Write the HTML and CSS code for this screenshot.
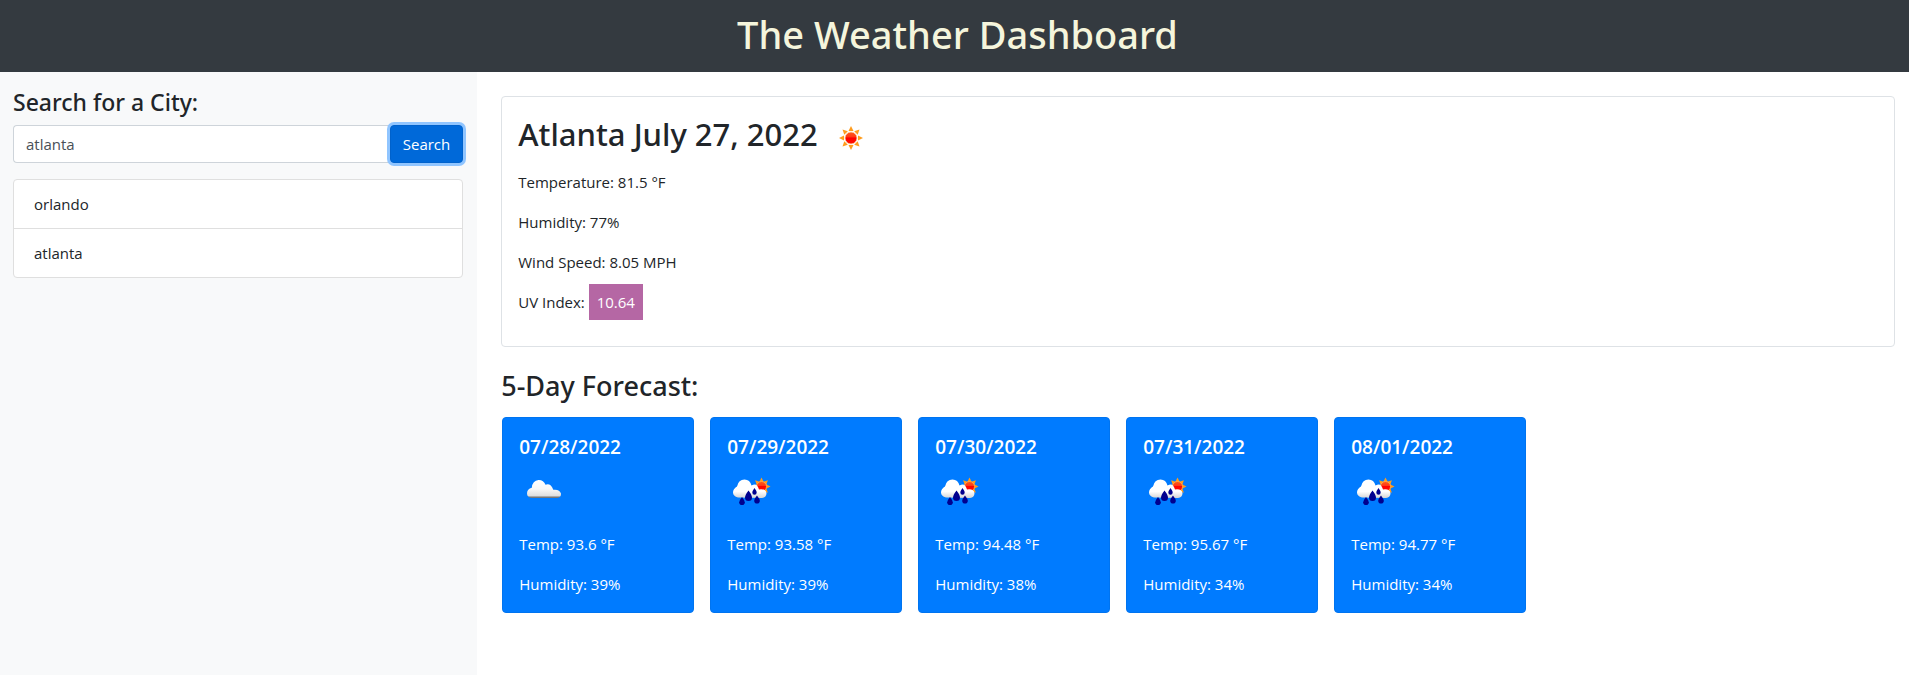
FILE: index.html
```
<!DOCTYPE html>
<html lang="en">
<head>
<meta charset="utf-8">
<title>The Weather Dashboard</title>
<meta name="viewport" content="width=device-width, initial-scale=1">
<link rel="stylesheet" href="styles.css">
</head>
<body>
<svg class="defs" aria-hidden="true">
  <defs>
    <linearGradient id="sunCore" x1="0" y1="0" x2="0" y2="1"><stop offset="0" stop-color="#ff5a1c"/><stop offset=".4" stop-color="#ff3a14"/><stop offset=".5" stop-color="#ff0000"/><stop offset="1" stop-color="#ff1200"/></linearGradient>
    <linearGradient id="cloudFill" x1="0" y1="0" x2="0" y2="1"><stop offset="0" stop-color="#fff"/><stop offset=".5" stop-color="#f8f8f8"/><stop offset=".88" stop-color="#dedede"/><stop offset=".95" stop-color="#777"/><stop offset="1" stop-color="#777"/></linearGradient>
    <linearGradient id="rainFill" x1="0" y1="0" x2="0" y2="1"><stop offset="0" stop-color="#fff"/><stop offset=".65" stop-color="#fff"/><stop offset="1" stop-color="#d5d5d5"/></linearGradient>
    <symbol id="sun" viewBox="0 0 50 50">
      <g fill="#ff9c1c"><path d="M25 13l2.500 5h-5z"/><path d="M25 13l2.500 5h-5z" transform="rotate(45 25 25)"/><path d="M25 13l2.500 5h-5z" transform="rotate(90 25 25)"/><path d="M25 13l2.500 5h-5z" transform="rotate(135 25 25)"/><path d="M25 13l2.500 5h-5z" transform="rotate(180 25 25)"/><path d="M25 13l2.500 5h-5z" transform="rotate(225 25 25)"/><path d="M25 13l2.500 5h-5z" transform="rotate(270 25 25)"/><path d="M25 13l2.500 5h-5z" transform="rotate(315 25 25)"/></g>
      <circle cx="25" cy="25" r="6" fill="url(#sunCore)" stroke="#ffd8a8" stroke-width=".8"/>
    </symbol>
    <symbol id="cloud" viewBox="0 0 50 50">
      <path fill="url(#cloudFill)" d="M12.500 34Q8 33.500 8 29.200Q8.200 25 12.800 23.700Q13.500 16.500 19.500 16Q24.500 15.800 26.500 20.800Q31.500 18.800 34.300 25.800Q40.500 25 42 29.500Q42.300 33 39 34z"/>
    </symbol>
    <symbol id="rain" viewBox="0 0 50 50">
      <g fill="#ff9c1c" transform="translate(34.500 22.500)"><path d="M0-9l2.500 5h-5z"/><path d="M0-9l2.500 5h-5z" transform="rotate(45)"/><path d="M0-9l2.500 5h-5z" transform="rotate(90)"/><path d="M0-9l2.500 5h-5z" transform="rotate(135)"/><path d="M0-9l2.500 5h-5z" transform="rotate(-45)"/></g>
      <circle cx="34.500" cy="22.500" r="5" fill="url(#sunCore)" stroke="#ffb050" stroke-width=".8"/>
      <path fill="url(#rainFill)" d="M11 33.500Q6 32 6 28.500Q6 25 10 22.500Q11.500 15.500 17.500 15.500Q23 15.500 24.500 21.500Q30 18 32 25.500Q38.500 24.500 39.500 29Q39.500 33.500 35 34z"/>
      <g fill="#00008f"><path d="M21.500 26.500Q25 31 25 33.500A3.500 3.500 0 0 1 18 33.500Q18 31 21.500 26.500z"/><path d="M27.500 24Q29.700 27 29.700 28.500A2.200 2.200 0 0 1 25.300 28.500Q25.300 27 27.500 24z"/><path d="M15 33Q17.800 36.500 17.800 38.200A2.800 2.800 0 0 1 12.200 38.200Q12.200 36.500 15 33z"/><path d="M30 31.500Q32.800 35 32.800 36.800A2.800 2.800 0 0 1 27.200 36.800Q27.200 35 30 31.500z"/></g>
    </symbol>
  </defs>
</svg>
<header class="topbar"><h1>The Weather Dashboard</h1></header>
<div class="layout">
  <aside class="sidebar">
    <h2><label for="city">Search for a City:</label></h2>
    <form class="search" onsubmit="return false">
      <input id="city" type="text" value="atlanta">
      <button type="submit">Search</button>
    </form>
    <ul class="history"><li>orlando</li><li>atlanta</li></ul>
  </aside>
  <main class="content">
    <section class="today">
      <h2>Atlanta July 27, 2022 <svg class="icon" role="img" aria-label="Clear sky"><use href="#sun"/></svg></h2>
      <p>Temperature: 81.5 °F</p>
      <p>Humidity: 77%</p>
      <p>Wind Speed: 8.05 MPH</p>
      <p>UV Index: <span class="uv">10.64</span></p>
    </section>
    <h3 class="forecast-title">5-Day Forecast:</h3>
    <section class="forecast">
      <article class="day"><h4>07/28/2022</h4><svg class="icon" role="img" aria-label="Cloudy"><use href="#cloud"/></svg><p>Temp: 93.6 °F</p><p>Humidity: 39%</p></article>
      <article class="day"><h4>07/29/2022</h4><svg class="icon" role="img" aria-label="Rain"><use href="#rain"/></svg><p>Temp: 93.58 °F</p><p>Humidity: 39%</p></article>
      <article class="day"><h4>07/30/2022</h4><svg class="icon" role="img" aria-label="Rain"><use href="#rain"/></svg><p>Temp: 94.48 °F</p><p>Humidity: 38%</p></article>
      <article class="day"><h4>07/31/2022</h4><svg class="icon" role="img" aria-label="Rain"><use href="#rain"/></svg><p>Temp: 95.67 °F</p><p>Humidity: 34%</p></article>
      <article class="day"><h4>08/01/2022</h4><svg class="icon" role="img" aria-label="Rain"><use href="#rain"/></svg><p>Temp: 94.77 °F</p><p>Humidity: 34%</p></article>
    </section>
  </main>
</div>
</body>
</html>
```

FILE: styles.css
```
*, *::before, *::after { box-sizing: border-box; }
body {
  margin: 0;
  min-height: 100vh;
  display: flex;
  flex-direction: column;
  font: 15px/24px "Segoe UI", "Open Sans", "Noto Sans", sans-serif;
  color: #212529;
  background: #fff;
}
h1, h2, h3, h4, p, ul { margin: 0; padding: 0; }
h1, h2, h3 { font-family: "Segoe UI", "Noto Sans", sans-serif; font-weight: 500; }
h4 { font-weight: 600; }
.defs { position: absolute; width: 0; height: 0; }
.icon { width: 50px; height: 50px; flex: none; }

.topbar { padding: 10px 16px 14px 22px; background: #343a40; text-align: center; }
.topbar h1 { font-size: 38px; line-height: 48px; color: beige; }

.layout { flex: 1; display: flex; }
.sidebar { flex: 0 0 25%; padding: 16px 14px 16px 13px; background: #f8f9fa; }
.sidebar h2 { font-size: 23px; line-height: 29px; margin-bottom: 8px; }
.search { display: flex; margin-bottom: 16px; }
.search input {
  flex: 1;
  min-width: 0;
  height: 38px;
  padding: 6px 12px;
  border: 1px solid #ced4da;
  border-right: 0;
  border-radius: 4px 0 0 4px;
  background: #fff;
  font: inherit;
  color: #495057;
}
.search button {
  height: 38px;
  padding: 6px 12px;
  border: 1px solid #0062cc;
  border-radius: 4px;
  background: #0069d9;
  box-shadow: 0 0 0 3px #90c5ff;
  font: inherit;
  color: #fff;
}
.history { list-style: none; border: 1px solid #dfdfdf; border-radius: 4px; background: #fff; }
.history li { padding: 12px 20px; }
.history li + li { border-top: 1px solid #dfdfdf; }

.content { flex: 1; min-width: 0; padding: 24px 14px 24px 24px; }
.today { padding: 16px; border: 1px solid #dee2e6; border-radius: 4px; }
.today h2 { display: flex; align-items: flex-start; gap: 8px; margin-bottom: 7px; font-size: 31px; line-height: 42px; }
.today p + p { margin-top: 16px; }
.today p:last-child { margin-bottom: 16px; }
.uv { padding: 8px; background: #b567a4; color: #fff; }
.forecast-title { margin: 22px 0 14px; font-size: 27px; line-height: 34px; }
.forecast { display: flex; flex-wrap: wrap; gap: 16px; padding-left: 1px; }
.day { width: 192px; padding: 17px 16px 16px; border: 1px solid #0074f0; border-radius: 4px; background: #007bff; color: #fff; }
.day h4 { font-size: 19px; line-height: 24px; margin-bottom: 5px; }
.day .icon { display: block; }
.day p { margin-top: 16px; }
.day .icon + p { margin-top: 18px; }
```
